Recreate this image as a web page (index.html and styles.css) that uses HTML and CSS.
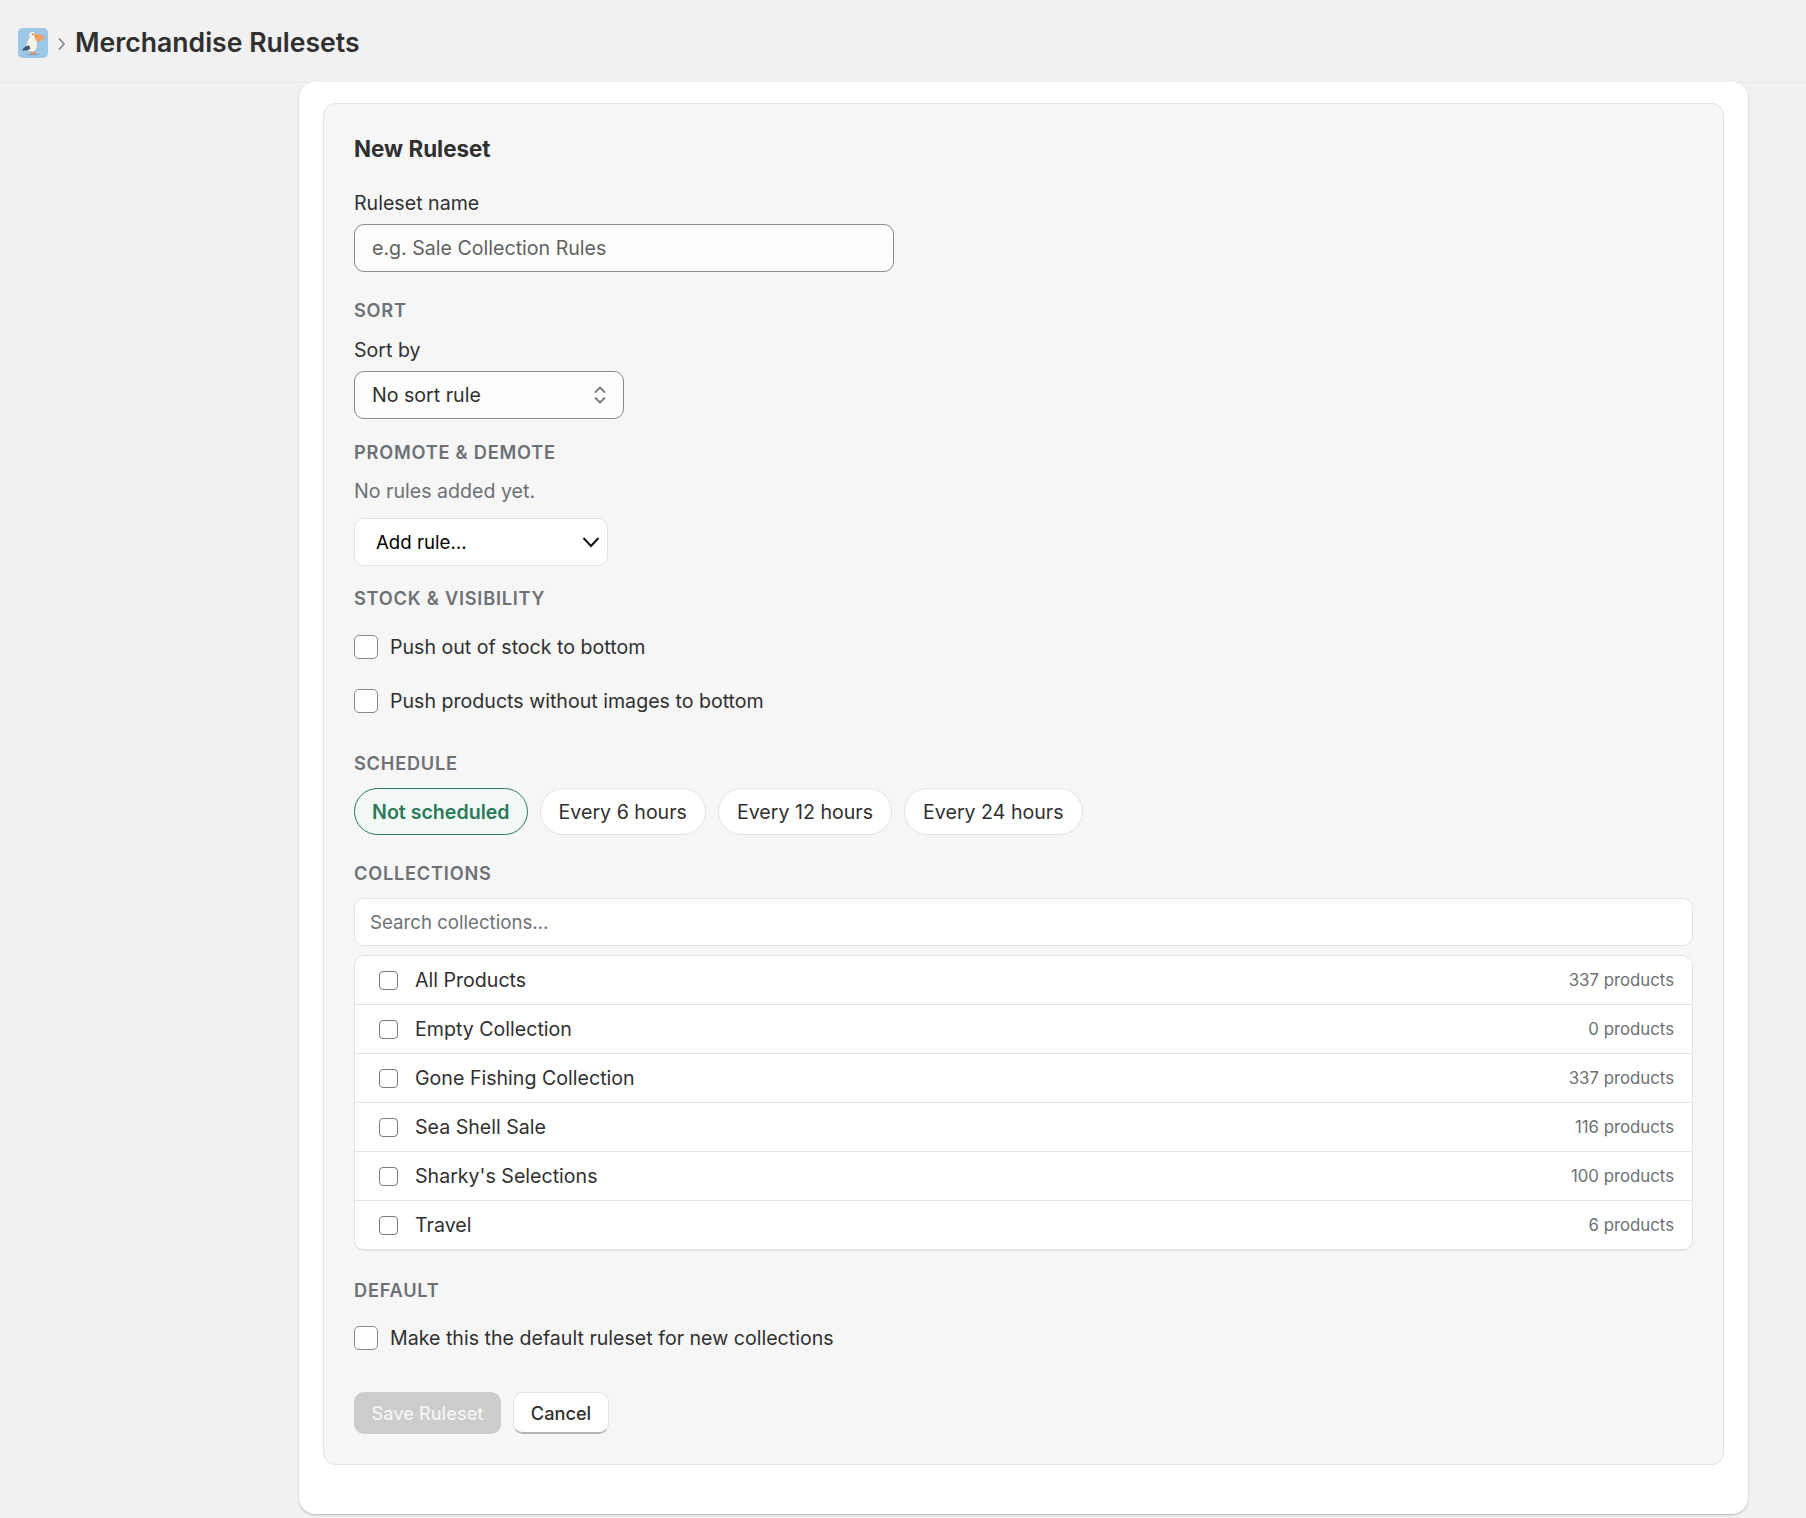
FILE: index.html
```html
<!DOCTYPE html>
<html lang="en">
<head>
<meta charset="utf-8">
<title>Merchandise Rulesets</title>
<link rel="stylesheet" href="styles.css">
</head>
<body>
<header class="topbar">
  <svg class="logo" viewBox="0 0 30 30" aria-hidden="true">
    <rect width="30" height="30" rx="5" fill="#9cc7e6"/>
    <ellipse cx="14.500" cy="26.600" rx="7.500" ry="1" fill="#7fb0d6"/>
    <path d="M13 23h1.400v2h1.200v-2H17v2.200h1.500v1.100h-7c.2-.7.700-1.100 1.500-1.200z" fill="#e58a4a"/>
    <path d="M12 8c-.5 3-3 5-3.500 9-.5 4 2.500 6.700 5.500 6.700 3.500 0 5-3.700 5-7.700 0-3-2-4.500-2-7z" fill="#f7f2e6"/>
    <circle cx="14.300" cy="7" r="3" fill="#f7f2e6"/>
    <path d="M15.500 5 26.700 8c-1.200 3-3.700 5.500-6.700 6-2-1.500-3.900-5-4.500-9z" fill="#ef9f63"/>
    <path d="M4 22.500c1.500-3 4-4.500 6.500-5 1.500 1 2 2.500 1.500 3.500-2.500 1.500-5.500 1.800-8 1.500z" fill="#3f5870"/>
    <circle cx="14.400" cy="6.300" r=".6" fill="#2f3b46"/>
  </svg>
  <svg class="crumb" viewBox="0 0 8 14" aria-hidden="true"><path d="M1.500 2 6 7l-4.500 5" fill="none" stroke="#8a8a8a" stroke-width="1.800" stroke-linecap="round" stroke-linejoin="round"/></svg>
  <h1 class="page-title">Merchandise Rulesets</h1>
</header>
<main class="shell">
  <div class="outer">
    <form class="panel">
      <h2 class="panel-title">New Ruleset</h2>

      <label class="field-label label-name" for="rs-name">Ruleset name</label>
      <input class="text-input" id="rs-name" type="text" placeholder="e.g. Sale Collection Rules">

      <div class="section-label sec-sort">SORT</div>
      <div class="field-label label-sort">Sort by</div>
      <div class="sort-select">
        <span>No sort rule</span>
        <svg class="updown" viewBox="0 0 14 20" aria-hidden="true"><path d="M2.500 7 7 2.500 11.500 7M2.500 13 7 17.500 11.500 13" fill="none" stroke="#7a7a7a" stroke-width="1.800" stroke-linecap="round" stroke-linejoin="round"/></svg>
      </div>

      <div class="section-label sec-promote">PROMOTE &amp; DEMOTE</div>
      <p class="muted">No rules added yet.</p>
      <div class="add-rule">
        <span>Add rule…</span>
        <svg class="chev" viewBox="0 0 18 12" aria-hidden="true"><path d="M1.500 2 9 10l7.500-8" fill="none" stroke="#111" stroke-width="2"/></svg>
      </div>

      <div class="section-label sec-stock">STOCK &amp; VISIBILITY</div>
      <label class="check-row row-a"><span class="box"></span>Push out of stock to bottom</label>
      <label class="check-row row-b"><span class="box"></span>Push products without images to bottom</label>

      <div class="section-label sec-schedule">SCHEDULE</div>
      <div class="pills">
        <span class="pill pill-on">Not scheduled</span>
        <span class="pill">Every 6 hours</span>
        <span class="pill">Every 12 hours</span>
        <span class="pill">Every 24 hours</span>
      </div>

      <div class="section-label sec-coll">COLLECTIONS</div>
      <input class="search" type="text" placeholder="Search collections…">
      <ul class="coll-list">
        <li class="coll"><span class="mini-box"></span><span class="coll-name">All Products</span><span class="coll-count">337 products</span></li>
        <li class="coll"><span class="mini-box"></span><span class="coll-name">Empty Collection</span><span class="coll-count">0 products</span></li>
        <li class="coll"><span class="mini-box"></span><span class="coll-name">Gone Fishing Collection</span><span class="coll-count">337 products</span></li>
        <li class="coll"><span class="mini-box"></span><span class="coll-name">Sea Shell Sale</span><span class="coll-count">116 products</span></li>
        <li class="coll"><span class="mini-box"></span><span class="coll-name">Sharky's Selections</span><span class="coll-count">100 products</span></li>
        <li class="coll"><span class="mini-box"></span><span class="coll-name">Travel</span><span class="coll-count">6 products</span></li>
      </ul>

      <div class="section-label sec-default">DEFAULT</div>
      <label class="check-row row-c"><span class="box"></span>Make this the default ruleset for new collections</label>

      <div class="actions">
        <button class="btn-save" type="button">Save Ruleset</button>
        <button class="btn-cancel" type="button">Cancel</button>
      </div>
    </form>
  </div>
</main>
</body>
</html>
```
FILE: styles.css
```css
* { box-sizing: border-box; }
html, body { margin: 0; padding: 0; }
body {
  background: #f1f1f1;
  font-family: Inter, "Liberation Sans", sans-serif;
  color: #303030;
  font-size: 19.6px;
  height: 1518px;
  overflow: hidden;
}
.topbar {
  height: 83px;
  display: flex;
  align-items: center;
  padding-left: 18px;
  padding-top: 4px;
  border-bottom: 1px solid #e8e8e8;
}
.logo { width: 30px; height: 30px; flex: none; }
.crumb { width: 8px; height: 14px; margin-left: 10px; margin-top: 2px; flex: none; }
.page-title {
  margin: 0 0 2px 9px;
  font-size: 26.6px;
  font-weight: 600;
  line-height: 32px;
  color: #303030;
}
.shell { padding-left: 299px; width: 1749px; margin-top: -1px; position: relative; }
.outer {
  width: 1449px;
  height: 1432px;
  background: #fff;
  border-radius: 16px;
  box-shadow: 0 1px 2px rgba(0,0,0,.25);
  padding: 21px 24px 0;
}
.panel {
  display: block;
  width: 1401px;
  height: 1362px;
  background: #f6f6f6;
  border: 1px solid #e3e3e3;
  border-radius: 12px;
  padding: 29px 26px 0 30px;
}
.panel-title { margin: 0; font-size: 22.4px; font-weight: 700; line-height: 32px; color: #303030; }
.field-label { display: block; line-height: 24px; }
.label-name { margin-top: 26px; }
.text-input {
  display: block;
  width: 540px;
  height: 48px;
  margin-top: 9px;
  padding: 0 17px;
  font: inherit;
  color: #303030;
  background: #fdfdfd;
  border: 1px solid #8a8a8a;
  border-radius: 10px;
  outline: none;
}
.text-input::placeholder { color: #616161; opacity: 1; }
.section-label {
  font-size: 18.2px;
  font-weight: 600;
  letter-spacing: .78px;
  line-height: 24px;
  color: #6d7175;
}
.sec-sort { margin-top: 26px; }
.label-sort { margin-top: 16px; }
.sort-select {
  width: 270px;
  height: 48px;
  margin-top: 9px;
  padding: 0 16px 0 17px;
  display: flex;
  align-items: center;
  justify-content: space-between;
  background: #fdfdfd;
  border: 1px solid #8a8a8a;
  border-radius: 10px;
}
.updown { width: 14px; height: 20px; }
.sec-promote { margin-top: 21px; }
.muted { margin: 15px 0 0; line-height: 24px; color: #6d7175; }
.add-rule {
  width: 254px;
  height: 48px;
  margin-top: 15px;
  padding: 0 7px 0 21px;
  display: flex;
  align-items: center;
  justify-content: space-between;
  background: #fff;
  border: 1px solid #e3e3e3;
  border-radius: 10px;
  color: #000;
  font-size: 18.67px;
}
.chev { width: 18px; height: 12px; }
.sec-stock { margin-top: 20px; }
.check-row { display: flex; align-items: center; line-height: 24px; }
.row-a { margin-top: 25px; }
.row-b { margin-top: 30px; }
.row-c { margin-top: 24px; }
.box {
  width: 24px;
  height: 24px;
  margin-right: 12px;
  flex: none;
  background: #fff;
  border: 1px solid #8a8a8a;
  border-radius: 5px;
}
.sec-schedule { margin-top: 38px; }
.pills { display: flex; gap: 12px; margin-top: 13px; }
.pill {
  height: 47px;
  padding: 0 18px;
  display: flex;
  align-items: center;
  background: #fff;
  border: 1px solid #e3e3e3;
  border-radius: 24px;
  color: #303030;
}
.pill-on {
  padding: 0 17px;
  background: #f1f8f5;
  border-color: #2c7a5b;
  color: #2c7a5b;
  font-weight: 600;
}
.sec-coll { margin-top: 26px; }
.search {
  display: block;
  width: 1339px;
  height: 48px;
  margin-top: 13px;
  padding: 0 15px;
  font: inherit;
  font-size: 18.67px;
  background: #fff;
  border: 1px solid #e3e3e3;
  border-radius: 10px;
  outline: none;
}
.search::placeholder { color: #6d7175; opacity: 1; }
.coll-list {
  list-style: none;
  width: 1339px;
  margin: 9px 0 0;
  padding: 0;
  background: #fff;
  border: 1px solid #e3e3e3;
  border-bottom-width: 2px;
  border-radius: 10px;
}
.coll {
  height: 49px;
  display: flex;
  align-items: center;
  padding: 0 18px 0 24px;
  border-top: 1px solid #e3e3e3;
}
.coll:first-child { border-top: 0; height: 48px; }
.mini-box {
  width: 19px;
  height: 19px;
  margin-right: 17px;
  flex: none;
  background: #fff;
  border: 1.500px solid #7a7a7a;
  border-radius: 4px;
}
.coll-name { flex: 1; }
.coll-count { font-size: 16.8px; color: #6d7175; }
.sec-default { margin-top: 27px; }
.actions { display: flex; gap: 12px; margin-top: 42px; }
.btn-save, .btn-cancel {
  height: 42px;
  font: inherit;
  font-size: 18.2px;
  border-radius: 10px;
  font-weight: 500;
  padding: 0;
}
.btn-save {
  width: 147px;
  background: #ccc;
  border: 0;
  color: #f3f3f3;
}
.btn-cancel {
  width: 96px;
  background: #fff;
  border: 1px solid #e3e3e3;
  border-bottom: 2px solid #b5b5b5;
  color: #303030;
}
```
